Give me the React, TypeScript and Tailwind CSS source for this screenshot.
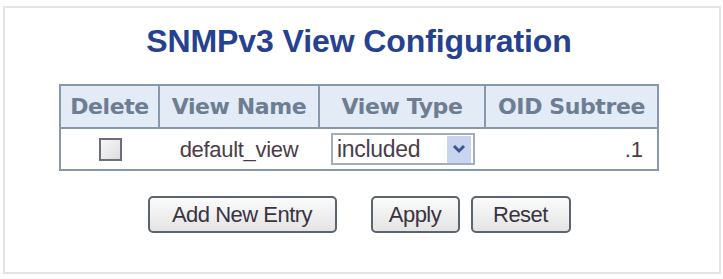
import React from "react";

const headers = ["Delete", "View Name", "View Type", "OID Subtree"];
const widths = ["w-[99px]", "w-[160px]", "w-[166px]", "w-[173px]"];

const Button: React.FC<{ label: string; className?: string }> = ({
  label,
  className = "",
}) => (
  <button
    className={`h-[37px] rounded-[5px] border-2 border-[#5c6470] bg-gradient-to-b from-[#fbfbfb] to-[#e4e4e4] text-[22px] text-[#3a3340] leading-none tracking-[-0.5px] ${className}`}
  >
    {label}
  </button>
);

export default function App() {
  return (
    <div className="w-[723px] h-[279px] bg-white pt-[6px] pl-[3px] font-['Liberation_Sans',Arial,sans-serif]">
      <div className="w-[718px] h-[268px] border-2 border-[#e4e4e4] flex flex-col items-center pt-[18px] pr-[6px]">
        <h1 className="text-[32px] leading-[30px] font-bold text-[#25418f] tracking-[-0.1px]">
          SNMPv3 View Configuration
        </h1>

        <table className="mt-[28px] border-collapse border-2 border-[#8797ac] table-fixed w-[598px]">
          <thead>
            <tr className="h-[43px] bg-[#e2ebf6]">
              {headers.map((h, i) => (
                <th
                  key={h}
                  className={`${widths[i]} border-2 border-[#8797ac] px-0 text-center text-[22px] font-bold text-[#6e7d91] font-['DejaVu_Sans',Verdana,sans-serif] whitespace-nowrap tracking-[-0.4px]`}
                >
                  {h}
                </th>
              ))}
            </tr>
          </thead>
          <tbody>
            <tr className="h-[42px] bg-white">
              <td className="border-2 border-[#8797ac] border-r-0 text-center">
                <span className="inline-block align-middle w-[23px] h-[23px] border-2 border-[#6a6f78] bg-gradient-to-br from-[#f7f7f7] to-[#dedede]" />
              </td>
              <td className="border-y-2 border-[#8797ac] text-center text-[22px] text-[#4a3d49] tracking-[-0.3px]">
                default_view
              </td>
              <td className="border-y-2 border-[#8797ac] pl-[12px]">
                <div className="flex items-center w-[144px] h-[32px] border-2 border-[#a4adbb] bg-white">
                  <span className="flex-1 pl-[4px] text-[23px] leading-none text-[#4a3d49] tracking-[-0.3px]">
                    included
                  </span>
                  <span className="flex items-center justify-center w-[24px] h-[27px] mr-[2px] bg-[#c9d4ef]">
                    <svg width="14" height="10" viewBox="0 0 14 10">
                      <path
                        d="M2 2 L7 7 L12 2"
                        fill="none"
                        stroke="#3c5596"
                        strokeWidth="3"
                      />
                    </svg>
                  </span>
                </div>
              </td>
              <td className="border-2 border-[#8797ac] border-l-0 text-right pr-[14px] text-[22px] text-[#4a3d49]">
                .1
              </td>
            </tr>
          </tbody>
        </table>

        <div className="mt-[25px] flex items-center">
          <Button label="Add New Entry" className="w-[189px]" />
          <Button label="Apply" className="w-[89px] ml-[34px]" />
          <Button label="Reset" className="w-[100px] ml-[11px]" />
        </div>
      </div>
    </div>
  );
}
